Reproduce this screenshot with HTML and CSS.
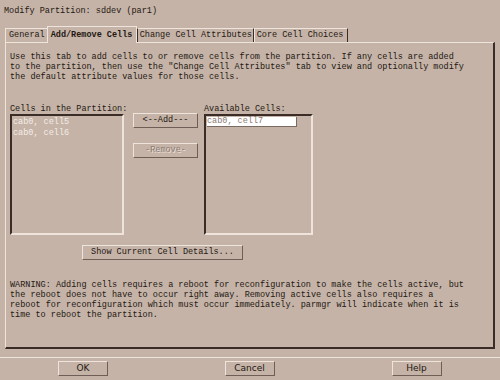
FILE: index.html
```html
<!DOCTYPE html>
<html lang="en">
  <head>
    <meta charset="utf-8">
    <title>Modify Partition</title>
    <link rel="stylesheet" href="styles.css">
  </head>
  <body>
    <div class="title">Modify Partition: sddev (par1)</div>

    <div class="tabs">
      <div class="tab first">General</div>
      <div class="tab active">Add/Remove Cells</div>
      <div class="tab">Change Cell Attributes</div>
      <div class="tab">Core Cell Choices</div>
    </div>

    <div class="panel">
      <p class="text">Use this tab to add cells to or remove cells from the partition. If any cells are added<br>to the partition, then use the "Change Cell Attributes" tab to view and optionally modify<br>the default attribute values for those cells.</p>

      <div class="lists">
        <div class="col left-col">
          <div class="label">Cells in the Partition:</div>
          <div class="listbox">
            <div class="item">cab0, cell5</div>
            <div class="item">cab0, cell6</div>
          </div>
        </div>
        <div class="middle">
          <div class="btn">&lt;--Add---</div>
          <div class="btn disabled">-Remove-</div>
        </div>
        <div class="col right-col">
          <div class="label">Available Cells:</div>
          <div class="listbox">
            <div class="item selected">cab0, cell7</div>
          </div>
        </div>
      </div>

      <div class="btn details">Show Current Cell Details...</div>

      <p class="text warning">WARNING: Adding cells requires a reboot for reconfiguration to make the cells active, but<br>the reboot does not have to occur right away. Removing active cells also requires a<br>reboot for reconfiguration which must occur immediately. parmgr will indicate when it is<br>time to reboot the partition.</p>
    </div>

    <div class="footer">
      <div class="slot"><div class="fbtn">OK</div></div>
      <div class="slot"><div class="fbtn">Cancel</div></div>
      <div class="slot"><div class="fbtn">Help</div></div>
    </div>
  </body>
</html>
```

FILE: styles.css
```css
html, body {
  margin: 0;
  width: 500px;
  height: 380px;
  background-color: #c5b3a7;
  overflow: hidden;
}

body {
  font-family: "Liberation Mono", "DejaVu Sans Mono", monospace;
  font-size: 8.5px;
  line-height: 10px;
  color: #241812;
}

.title {
  padding: 6px 0 0 4px;
  height: 19px;
}

/* tab strip */
.tabs {
  display: flex;
  align-items: flex-end;
  height: 17px;
  margin-left: 5px;
}

.tab {
  height: 13px;
  line-height: 13px;
  padding: 0 3px;
  border-top: 1px solid #eee4dc;
  border-right: 1px solid #3a2c26;
  white-space: nowrap;
  overflow: hidden;
}

.tab.first {
  border-left: 1px solid #eee4dc;
  border-right: none;
  padding-right: 2px;
}

.tab.active {
  height: 16px;
  line-height: 16px;
  font-weight: bold;
  border-left: 1px solid #eee4dc;
  border-right: 1px solid #eee4dc;
  padding: 0 3px;
  position: relative;
  top: 1px;
  background-color: #c5b3a7;
  width: 82px;
}

.tab:nth-child(3) {
  border-left: 1px solid #3a2c26;
  padding: 0 2px;
  width: 111px;
}

.tab:nth-child(4) {
  border-left: 1px solid #eee4dc;
  padding: 0 2px;
  width: 88px;
}

/* main panel */
.panel {
  width: 483px;
  height: 295px;
  margin-left: 5px;
  padding: 9px 0 0 4px;
  border-top: 1px solid #eee4dc;
  border-left: 1px solid #eee4dc;
  border-right: 2px solid #3a2c26;
  border-bottom: 2px solid #3a2c26;
}

.text {
  margin: 0;
  white-space: nowrap;
}

.lists {
  display: flex;
  margin-top: 22px;
}

.col {
  display: flex;
  flex-direction: column;
  flex: none;
}

.left-col {
  width: 114px;
}

.right-col {
  width: 109px;
}

.label {
  height: 10px;
  white-space: nowrap;
}

.listbox {
  height: 115px;
  padding: 1px;
  border-top: 2px solid #3a2c26;
  border-left: 2px solid #3a2c26;
  border-right: 2px solid #eee4dc;
  border-bottom: 2px solid #eee4dc;
}

.item {
  height: 11px;
  line-height: 11px;
  color: #f4ece6;
  white-space: nowrap;
}

.selected {
  width: 89px;
  height: 9px;
  line-height: 9px;
  background-color: #ffffff;
  color: #8a7a72;
  border-right: 1px solid #7a6a62;
  border-bottom: 1px solid #7a6a62;
}

.middle {
  display: flex;
  flex-direction: column;
  flex: none;
  gap: 15px;
  width: 65px;
  margin: 9px 6px 0 9px;
}

.btn {
  height: 13px;
  line-height: 13px;
  text-align: center;
  border-top: 1px solid #eee4dc;
  border-left: 1px solid #eee4dc;
  border-right: 1px solid #6e5e56;
  border-bottom: 1px solid #6e5e56;
  white-space: nowrap;
}

.btn.disabled {
  color: #8a7a72;
  text-shadow: 1px 1px 0 #eee4dc;
}

.details {
  width: 159px;
  margin: 10px 0 0 72px;
}

.warning {
  margin-top: 20px;
}

/* bottom button row */
.footer {
  display: grid;
  grid-template-columns: 166px 167px 167px;
  margin-top: 8px;
  padding-top: 3px;
  border-top: 1px solid #eee4dc;
}

.slot {
  display: flex;
  justify-content: center;
}

.fbtn {
  width: 48px;
  height: 13px;
  line-height: 13px;
  text-align: center;
  font-family: "DejaVu Sans", "Liberation Sans", sans-serif;
  font-size: 9px;
  border-top: 1px solid #eee4dc;
  border-left: 1px solid #eee4dc;
  border-right: 1px solid #6e5e56;
  border-bottom: 1px solid #6e5e56;
}
```
